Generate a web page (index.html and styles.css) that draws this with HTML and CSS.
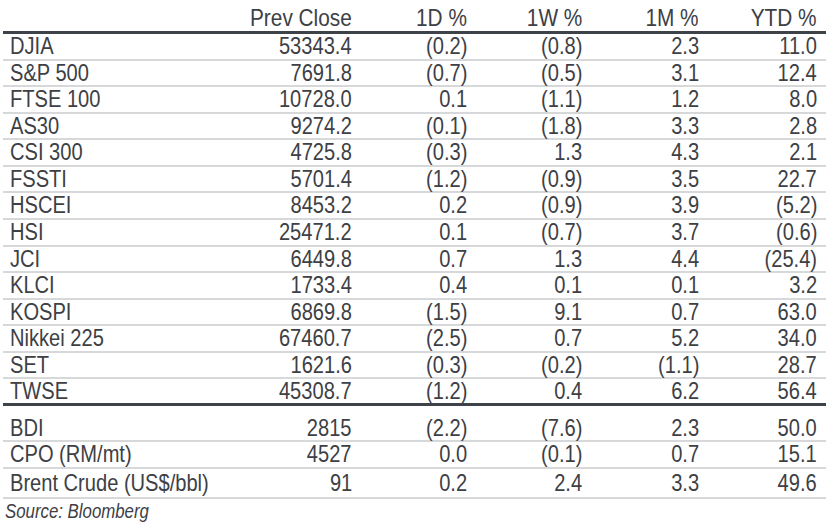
FILE: index.html
```html
<!DOCTYPE html>
<html lang="en">
<head>
<meta charset="utf-8">
<title>Market Indices</title>
<link rel="stylesheet" href="styles.css">
</head>
<body>
<div class="sheet">
  <div class="row head">
    <div class="lbl"></div><div><span>Prev Close</span></div><div><span>1D %</span></div><div><span>1W %</span></div><div><span>1M %</span></div><div><span>YTD %</span></div>
  </div>
  <div class="group">
    <div class="row"><div class="lbl"><span>DJIA</span></div><div><span>53343.4</span></div><div><span>(0.2)</span></div><div><span>(0.8)</span></div><div><span>2.3</span></div><div><span>11.0</span></div></div>
    <div class="row"><div class="lbl"><span>S&amp;P 500</span></div><div><span>7691.8</span></div><div><span>(0.7)</span></div><div><span>(0.5)</span></div><div><span>3.1</span></div><div><span>12.4</span></div></div>
    <div class="row"><div class="lbl"><span>FTSE 100</span></div><div><span>10728.0</span></div><div><span>0.1</span></div><div><span>(1.1)</span></div><div><span>1.2</span></div><div><span>8.0</span></div></div>
    <div class="row"><div class="lbl"><span>AS30</span></div><div><span>9274.2</span></div><div><span>(0.1)</span></div><div><span>(1.8)</span></div><div><span>3.3</span></div><div><span>2.8</span></div></div>
    <div class="row"><div class="lbl"><span>CSI 300</span></div><div><span>4725.8</span></div><div><span>(0.3)</span></div><div><span>1.3</span></div><div><span>4.3</span></div><div><span>2.1</span></div></div>
    <div class="row"><div class="lbl"><span>FSSTI</span></div><div><span>5701.4</span></div><div><span>(1.2)</span></div><div><span>(0.9)</span></div><div><span>3.5</span></div><div><span>22.7</span></div></div>
    <div class="row"><div class="lbl"><span>HSCEI</span></div><div><span>8453.2</span></div><div><span>0.2</span></div><div><span>(0.9)</span></div><div><span>3.9</span></div><div><span>(5.2)</span></div></div>
    <div class="row"><div class="lbl"><span>HSI</span></div><div><span>25471.2</span></div><div><span>0.1</span></div><div><span>(0.7)</span></div><div><span>3.7</span></div><div><span>(0.6)</span></div></div>
    <div class="row"><div class="lbl"><span>JCI</span></div><div><span>6449.8</span></div><div><span>0.7</span></div><div><span>1.3</span></div><div><span>4.4</span></div><div><span>(25.4)</span></div></div>
    <div class="row"><div class="lbl"><span>KLCI</span></div><div><span>1733.4</span></div><div><span>0.4</span></div><div><span>0.1</span></div><div><span>0.1</span></div><div><span>3.2</span></div></div>
    <div class="row"><div class="lbl"><span>KOSPI</span></div><div><span>6869.8</span></div><div><span>(1.5)</span></div><div><span>9.1</span></div><div><span>0.7</span></div><div><span>63.0</span></div></div>
    <div class="row"><div class="lbl"><span>Nikkei 225</span></div><div><span>67460.7</span></div><div><span>(2.5)</span></div><div><span>0.7</span></div><div><span>5.2</span></div><div><span>34.0</span></div></div>
    <div class="row"><div class="lbl"><span>SET</span></div><div><span>1621.6</span></div><div><span>(0.3)</span></div><div><span>(0.2)</span></div><div><span>(1.1)</span></div><div><span>28.7</span></div></div>
    <div class="row end"><div class="lbl"><span>TWSE</span></div><div><span>45308.7</span></div><div><span>(1.2)</span></div><div><span>0.4</span></div><div><span>6.2</span></div><div><span>56.4</span></div></div>
  </div>
  <div class="group commod">
    <div class="row"><div class="lbl"><span>BDI</span></div><div><span>2815</span></div><div><span>(2.2)</span></div><div><span>(7.6)</span></div><div><span>2.3</span></div><div><span>50.0</span></div></div>
    <div class="row"><div class="lbl"><span>CPO (RM/mt)</span></div><div><span>4527</span></div><div><span>0.0</span></div><div><span>(0.1)</span></div><div><span>0.7</span></div><div><span>15.1</span></div></div>
    <div class="row last"><div class="lbl"><span>Brent Crude (US$/bbl)</span></div><div><span>91</span></div><div><span>0.2</span></div><div><span>2.4</span></div><div><span>3.3</span></div><div><span>49.6</span></div></div>
  </div>
  <div class="source"><span>Source: Bloomberg</span></div>
</div>
</body>
</html>
```
FILE: styles.css
```css
html, body {
  margin: 0;
  padding: 0;
  background: #ffffff;
}
.sheet {
  width: 823px;
  margin-left: 3px;
  font-family: "Liberation Sans", Arial, sans-serif;
  font-size: 24.5px;
  color: #3d4045;
}
.row {
  display: grid;
  grid-template-columns: 220px 129px 115px 115px 117px 118px;
  padding-right: 9px;
  box-sizing: border-box;
  height: 26.57px;
  border-bottom: 2px solid #d6d8da;
  align-items: center;
  line-height: 1;
}
.row > div {
  text-align: right;
  white-space: nowrap;
}
.row span,
.source span {
  display: inline-block;
  transform: scaleX(0.82);
  transform-origin: right center;
}
.row > .lbl {
  text-align: left;
  padding-left: 7px;
}
.row > .lbl span,
.source span {
  transform-origin: left center;
}
.row.head {
  height: 34px;
  border-bottom: 3px solid #3e4349;
  align-items: end;
  padding-bottom: 1px;
}
.row.head span {
  transform: scaleX(0.85);
}
.row.end {
  border-bottom: 3px solid #3e4349;
}
.commod {
  margin-top: 10px;
}
.row.last {
  height: 30px;
}
.source {
  font-style: italic;
  font-size: 20.5px;
  margin-left: 2px;
  margin-top: 2px;
  line-height: 1;
  white-space: nowrap;
}
```
